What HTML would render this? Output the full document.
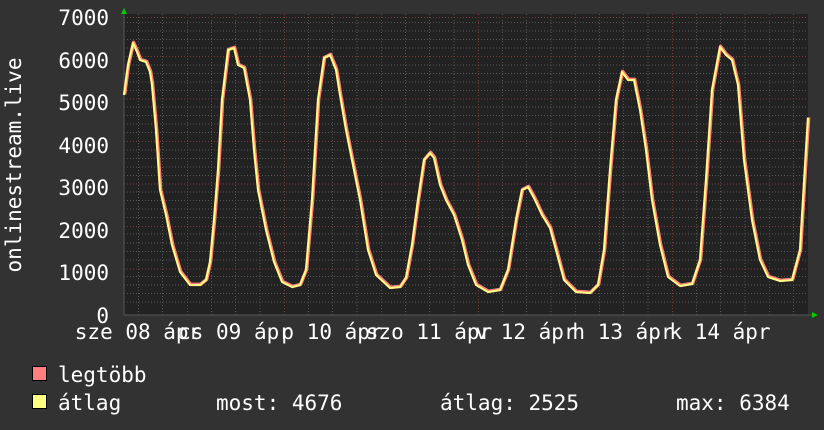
<!DOCTYPE html>
<html><head><meta charset="utf-8"><style>
html,body{margin:0;padding:0;background:#333;}
svg{display:block}
text{font-family:"DejaVu Sans Mono","Liberation Mono",monospace;font-size:21px;fill:#fff}
</style></head><body>
<svg width="824" height="430" viewBox="0 0 824 430" xmlns="http://www.w3.org/2000/svg">
<rect width="824" height="430" fill="#323232"/>
<rect x="124" y="14" width="684" height="301" fill="#222"/>
<g stroke="#555" stroke-width="1" stroke-dasharray="1,2">
<path d="M124 22.5H808M124 31H808M124 39.5H808M124 48H808M124 65H808M124 73.5H808M124 82H808M124 90.5H808M124 107H808M124 115.5H808M124 124H808M124 132.5H808M124 150H808M124 158.5H808M124 167H808M124 175.5H808M124 192H808M124 200.5H808M124 209H808M124 217.5H808M124 234H808M124 243H808M124 251.5H808M124 260H808M124 276.5H808M124 285H808M124 293.5H808M124 302H808"/>
<path d="M138.5 14V315M162.5 14V315M211.5 14V315M235.5 14V315M260 14V315M308.5 14V315M332.5 14V315M357 14V315M405.5 14V315M429.5 14V315M454 14V315M502.5 14V315M526.5 14V315M551 14V315M599.5 14V315M623.5 14V315M648 14V315M696.5 14V315M720.5 14V315M745 14V315M793.5 14V315"/>
</g>
<g stroke="#7a3a3a" stroke-width="1" stroke-dasharray="1,2">
<path d="M124 17.5H808M124 56.5H808M124 99H808M124 141.5H808M124 184H808M124 226.5H808M124 269H808"/>
<path d="M187.5 14V315M284.5 14V315M381.5 14V315M478.5 14V315M575.5 14V315M672.5 14V315M769.5 14V315"/>
</g>
<path d="M124 315H812M124 315V10" stroke="#555" stroke-width="1"/>
<polygon points="121,14 127,14 124,8" fill="#0c0"/>
<polygon points="812,312 812,318 818,315" fill="#0c0"/>
<g fill="none" stroke-linejoin="round">
<polyline id="c" stroke="#ff7f7f" stroke-width="3.5" transform="translate(0.6,-0.6)" points="124,95 128,65 133,43 137,52 140,60 146,62 150,72 152,85 156,130 160,190 166,215 172,245 180,272 190,285 200,285 206,280 210,262 214,220 218,170 222,100 228,50 234,48 238,65 244,68 250,100 254,150 258,190 266,230 274,262 282,282 292,287 300,285 306,270 312,200 318,100 324,58 330,55 336,70 340,95 346,130 352,160 360,200 368,250 376,275 390,288 400,287 406,278 412,245 418,200 424,160 430,153 434,158 440,185 446,200 454,215 462,240 468,265 476,285 488,292 500,290 508,270 516,220 522,190 528,187 534,198 542,215 550,228 556,250 564,280 576,292 590,293 598,285 604,250 610,170 616,100 622,72 628,80 634,80 640,110 646,150 652,200 660,245 668,277 680,286 692,284 700,260 706,180 712,90 720,47 726,55 732,60 738,85 744,160 752,220 760,260 768,277 780,281 792,280 800,250 806,150 808,118"/>
<polyline stroke="#ffff80" stroke-width="2" points="124,95 128,65 133,43 137,52 140,60 146,62 150,72 152,85 156,130 160,190 166,215 172,245 180,272 190,285 200,285 206,280 210,262 214,220 218,170 222,100 228,50 234,48 238,65 244,68 250,100 254,150 258,190 266,230 274,262 282,282 292,287 300,285 306,270 312,200 318,100 324,58 330,55 336,70 340,95 346,130 352,160 360,200 368,250 376,275 390,288 400,287 406,278 412,245 418,200 424,160 430,153 434,158 440,185 446,200 454,215 462,240 468,265 476,285 488,292 500,290 508,270 516,220 522,190 528,187 534,198 542,215 550,228 556,250 564,280 576,292 590,293 598,285 604,250 610,170 616,100 622,72 628,80 634,80 640,110 646,150 652,200 660,245 668,277 680,286 692,284 700,260 706,180 712,90 720,47 726,55 732,60 738,85 744,160 752,220 760,260 768,277 780,281 792,280 800,250 806,150 808,118"/>
</g>
<g text-anchor="end">
<text x="109" y="25">7000</text>
<text x="109" y="68">6000</text>
<text x="109" y="110">5000</text>
<text x="109" y="153">4000</text>
<text x="109" y="195">3000</text>
<text x="109" y="238">2000</text>
<text x="109" y="280">1000</text>
<text x="109" y="323">0</text>
</g>
<text transform="translate(21,165) rotate(-90)" text-anchor="middle">onlinestream.live</text>
<g text-anchor="middle">
<text x="138" y="339">sze 08 ápr</text>
<text x="235" y="339">cs 09 ápr</text>
<text x="332" y="339">p 10 ápr</text>
<text x="429" y="339">szo 11 ápr</text>
<text x="526" y="339">v 12 ápr</text>
<text x="623" y="339">h 13 ápr</text>
<text x="720" y="339">k 14 ápr</text>
</g>
<rect x="32.5" y="366.5" width="14" height="14" fill="#ff7f7f" stroke="#000"/>
<rect x="32.5" y="394.5" width="14" height="14" fill="#ffff80" stroke="#000"/>
<text x="58" y="382">legtöbb</text>
<text x="58" y="410">átlag</text>
<text x="216" y="410">most: 4676</text>
<text x="440" y="410">átlag: 2525</text>
<text x="676" y="410">max: 6384</text>
</svg>
</body></html>
